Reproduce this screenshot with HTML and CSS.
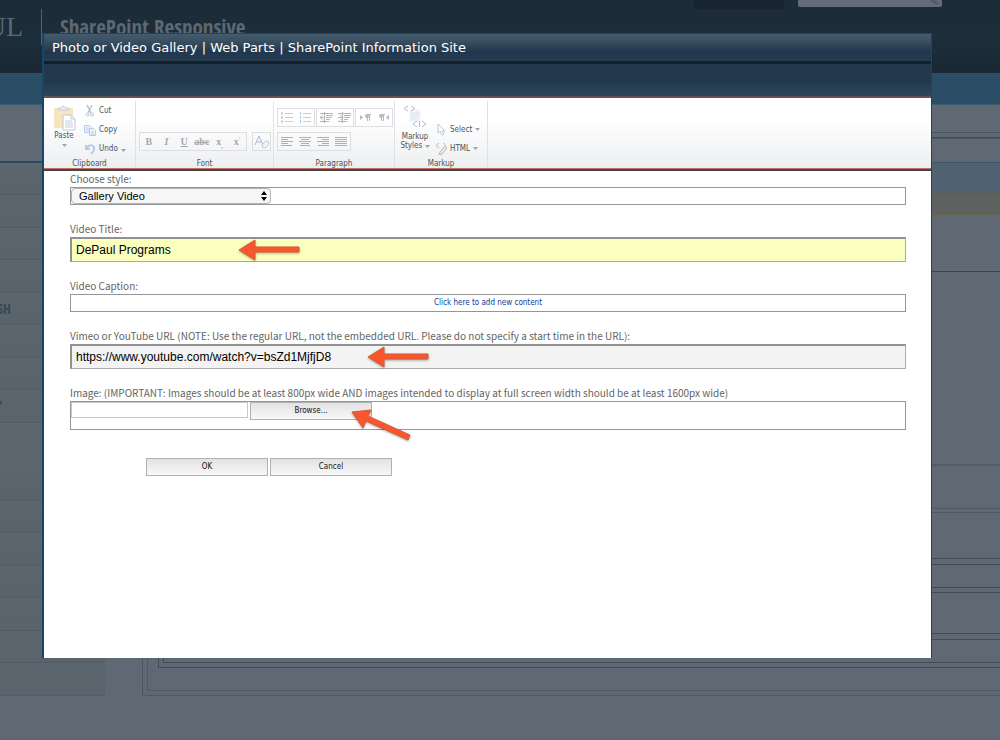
FILE: index.html
```html
<!DOCTYPE html>
<html lang="en">
<head>
<meta charset="utf-8">
<title>Photo or Video Gallery</title>
<link rel="stylesheet" href="styles.css">
</head>
<body>
<div class="site">
  <header class="masthead">
    <span class="logo">UL</span>
    <span class="site-name">SharePoint Responsive</span>
    <span class="top-link"></span>
    <span class="top-search"><svg width="14" height="8" viewBox="0 0 14 8"><path d="M3 0l7 4" stroke="#505c66" stroke-width="3"/></svg></span>
  </header>
  <div class="nav"></div>
  <div class="columns">
    <div class="side">
      <div class="side-head"></div>
      <div class="side-row"></div><div class="side-row"></div><div class="side-row"></div><div class="side-row"></div>
      <div class="side-row side-text">SH</div>
      <div class="side-row"></div><div class="side-row"></div><div class="side-row side-mark">’</div>
      <div class="side-gap"></div>
      <div class="side-row"></div><div class="side-row"></div><div class="side-row"></div><div class="side-row"></div><div class="side-row"></div><div class="side-row"></div><div class="side-row"></div>
    </div>
    <div class="main">
      <div class="crumb"></div>
      <div class="tabs"></div>
      <div class="info"></div>
      <div class="warn"></div>
      <div class="intro"></div>
      <div class="blank"></div>
      <div class="zone zone-a"></div>
      <div class="zones">
        <div class="part part-a"></div>
        <div class="part part-b"></div>
        <div class="part part-c"></div>
        <div class="part part-d"></div>
      </div>
    </div>
  </div>
</div>

<div class="dialog" role="dialog" aria-labelledby="dialog-title">
  <h1 class="dialog-title" id="dialog-title">Photo or Video Gallery | Web Parts | SharePoint Information Site</h1>
  <div class="band"></div>
  <div class="ribbon">
    <section class="group clipboard">
      <div class="group-body">
        <button class="tool big" type="button">
          <svg width="23" height="26" viewBox="0 0 23 26"><rect x="1" y="3" width="19" height="20" rx="1" fill="#f7e5bd"/><path d="M5 5V3h3q2-4 5 0h3v2z" fill="#eee" stroke="#c9ccd2"/><path d="M10 10h8l4 4v11H10z" fill="#fff" stroke="#b9cbe0"/><path d="M18 10v4h4M12 16h7M12 18h8M12 20h8M12 22h8" stroke="#c4d1e2" fill="none"/></svg>
          <span>Paste</span><svg class="caret" width="5" height="3"><path d="M0 0h5L2.500 3z"/></svg>
        </button>
        <div class="stack">
          <button class="tool" type="button"><svg width="12" height="12" viewBox="0 0 12 12" fill="none" stroke="#b4c4d8"><path d="M3 0l4 8M8 0L4 8" stroke-width="1.500"/><circle cx="3.500" cy="9.500" r="1.500"/><circle cx="8" cy="9.500" r="1.500"/></svg>Cut</button>
          <button class="tool" type="button"><svg width="12" height="12" viewBox="0 0 12 12" fill="#eef4fb" stroke="#b9cbe3"><path d="M.500 1.500h5l2 2v5h-7z"/><path d="M5.500 4.500h4l2 2v5h-6z"/><path d="M2 4h3M2 6h3M7 8h3M7 10h3"/></svg>Copy</button>
          <button class="tool" type="button"><svg width="12" height="12" viewBox="0 0 12 12" fill="none" stroke="#b9c8e8" stroke-width="2"><path d="M2 2v4h4M2 5q5-5 8-1 1 3-3 7"/></svg>Undo<svg class="caret" width="5" height="3"><path d="M0 0h5L2.500 3z"/></svg></button>
        </div>
      </div>
      <h2>Clipboard</h2>
    </section>
    <section class="group font">
      <div class="group-body low">
        <div class="strip">
          <button class="fmt" type="button"><b>B</b></button><button class="fmt" type="button"><b><i>I</i></b></button><button class="fmt" type="button"><b><u>U</u></b></button><button class="fmt" type="button"><b><s>abc</s></b></button><button class="fmt" type="button"><b>x<sub>,</sub></b></button><button class="fmt" type="button"><b>x<sup>'</sup></b></button>
        </div>
        <div class="strip">
          <button class="fmt" type="button" aria-label="Clear format"><svg width="16" height="14" viewBox="0 0 16 14" fill="none" stroke="#a9b8d4"><path d="M1 10L5 1l4 9M3 7h5"/><path d="M8 10l4-4q3 0 3 3l-4 4q-3 0-3-3z" fill="#f3f4f8" stroke="#c6c4d2"/></svg></button>
        </div>
      </div>
      <h2>Font</h2>
    </section>
    <section class="group paragraph">
      <div class="group-body rows">
        <div class="strips">
          <div class="strip">
            <button class="fmt" type="button" aria-label="Bullets"><svg width="12" height="11" viewBox="0 0 12 11"><path d="M4 1.500h8M4 5.500h8M4 9.500h8" stroke="#cdcdd0"/><path d="M0 1.500h2M0 5.500h2M0 9.500h2" stroke="#b9c7dc" stroke-width="2"/></svg></button>
            <button class="fmt" type="button" aria-label="Numbering"><svg width="12" height="11" viewBox="0 0 12 11"><path d="M4 1.500h8M4 5.500h8M4 9.500h8" stroke="#cdcdd0"/><path d="M1.500 0v3M1.500 4v3M1.500 8v3" stroke="#b9c7dc"/></svg></button>
          </div>
          <div class="strip">
            <button class="fmt" type="button" aria-label="Outdent"><svg width="13" height="11" viewBox="0 0 13 11"><path d="M0 1.500h13M6 3.500h7M6 5.500h6M6 7.500h4M0 9.500h9M4.500 0v11" stroke="#b4b4b9"/><path d="M5 5.500H0l3-3M0 5.500l3 3" stroke="#a9bad3" fill="none"/></svg></button>
            <button class="fmt" type="button" aria-label="Indent"><svg width="13" height="11" viewBox="0 0 13 11"><path d="M0 1.500h13M6 3.500h7M6 5.500h6M6 7.500h4M0 9.500h9M4.500 0v11" stroke="#b4b4b9"/><path d="M0 5.500h5l-3-3M5 5.500l-3 3" stroke="#a9bad3" fill="none"/></svg></button>
          </div>
          <div class="strip">
            <button class="fmt" type="button" aria-label="Left to right"><svg width="11" height="9" viewBox="0 0 11 9"><path d="M0 2l3 2.500L0 7z" fill="#a6b9d4"/><path d="M11 1.500H6M7.500 1v7M9.500 1v7" stroke="#b9b9b9"/><circle cx="7" cy="3" r="2" fill="#b9b9b9"/></svg></button>
            <button class="fmt" type="button" aria-label="Right to left"><svg width="11" height="9" viewBox="0 0 11 9"><path d="M11 2L8 4.500 11 7z" fill="#a6b9d4"/><path d="M7 1.500H2M3.500 1v7M5.500 1v7" stroke="#b9b9b9"/><circle cx="3" cy="3" r="2" fill="#b9b9b9"/></svg></button>
          </div>
        </div>
        <div class="strips">
          <div class="strip">
            <button class="fmt" type="button" aria-label="Align left"><svg width="12" height="10"><path d="M0 .500h12M0 2.500h7M0 4.500h12M0 6.500h7M0 8.500h11" stroke="#b0b0b3"/></svg></button>
            <button class="fmt" type="button" aria-label="Center"><svg width="12" height="10"><path d="M0 .500h12M2 2.500h8M0 4.500h12M2 6.500h8M1 8.500h10" stroke="#b0b0b3"/></svg></button>
            <button class="fmt" type="button" aria-label="Align right"><svg width="12" height="10"><path d="M0 .500h12M5 2.500h7M0 4.500h12M5 6.500h7M1 8.500h11" stroke="#b0b0b3"/></svg></button>
            <button class="fmt" type="button" aria-label="Justify"><svg width="12" height="10"><path d="M0 .500h12M0 2.500h12M0 4.500h12M0 6.500h12M0 8.500h12" stroke="#b0b0b3"/></svg></button>
          </div>
        </div>
      </div>
      <h2>Paragraph</h2>
    </section>
    <section class="group markup">
      <div class="group-body">
        <button class="tool big" type="button">
          <svg width="24" height="24" viewBox="0 0 24 24" fill="none" stroke="#bcbcc0"><path d="M7 5h9l1 2v9H7z" fill="#f3f7fc" stroke="#e9eff6"/><path d="M8 8h8M8 10h8M8 12h8M8 14h6" stroke="#d9e2ee"/><path d="M5 1L1 3.500 5 6M8 1l4 2.500L8 6M14 16l-4 3 4 3M19 16l4 3-4 3M16.500 16v6"/></svg>
          <span>Markup<br>Styles <svg class="caret" width="5" height="3"><path d="M0 0h5L2.500 3z"/></svg></span>
        </button>
        <div class="stack">
          <button class="tool" type="button"><svg width="12" height="13" viewBox="0 0 12 13"><path d="M3 1v9l2-2 2 4 2-1-2-3h3z" fill="#fff" stroke="#c0c5cd"/></svg>Select<svg class="caret" width="5" height="3"><path d="M0 0h5L2.500 3z"/></svg></button>
          <button class="tool" type="button"><svg width="12" height="13" viewBox="0 0 12 13" fill="none" stroke="#bbb8b6"><path d="M4 1L1 3.500 4 6M8 1l3 2.500L8 6"/><path d="M5 10l5-6 2 2-5 6-3 1z" fill="#f4e7d8"/></svg>HTML<svg class="caret" width="5" height="3"><path d="M0 0h5L2.500 3z"/></svg></button>
        </div>
      </div>
      <h2>Markup</h2>
    </section>
  </div>

  <form class="form">
    <div class="field">
      <label for="style">Choose style:</label>
      <div class="box">
        <div class="select"><select id="style"><option>Gallery Video</option></select><svg width="6" height="10" viewBox="0 0 6 10"><path d="M3 0l3 4H0zM3 10l3-4H0z"/></svg></div>
      </div>
    </div>
    <div class="field">
      <label for="title">Video Title:</label>
      <input class="text active" id="title" type="text" value="DePaul Programs">
      <svg class="arrow at-title" width="64" height="24" viewBox="0 0 64 24"><path d="M2 12L18 2v7h44v5H18v8z"/></svg>
    </div>
    <div class="field">
      <span class="label">Video Caption:</span>
      <div class="box center"><a href="#caption">Click here to add new content</a></div>
    </div>
    <div class="field">
      <label for="url">Vimeo or YouTube URL (NOTE: Use the regular URL, not the embedded URL. Please do not specify a start time in the URL):</label>
      <input class="text" id="url" type="text" value="https://www.youtube.com/watch?v=bsZd1MjfjD8">
      <svg class="arrow at-url" width="64" height="24" viewBox="0 0 64 24"><path d="M2 12L18 2v7h44v5H18v8z"/></svg>
    </div>
    <div class="field">
      <label for="image">Image: (IMPORTANT: Images should be at least 800px wide AND images intended to display at full screen width should be at least 1600px wide)</label>
      <div class="box upload"><input id="image" type="text"><button class="push" type="button">Browse...</button></div>
      <svg class="arrow at-image" width="64" height="36" viewBox="0 0 64 36"><path d="M2 4L21 2l-3 6 42 19-2 5-42-19-3 7z"/></svg>
    </div>
    <div class="actions"><button class="push" type="button">OK</button><button class="push" type="button">Cancel</button></div>
  </form>
</div>
</body>
</html>
```
FILE: styles.css
```css
* { box-sizing: border-box; }
body { margin: 0; background: #5f6873; font-family: "Noto Sans CJK SC", "Noto Sans", sans-serif; position: relative; }
button, input, select { font: inherit; margin: 0; }
svg { flex: none; }

/* Dimmed page */
.site { min-height: 100vh; overflow: hidden; }
.masthead { height: 73px; display: flex; align-items: flex-start; background: linear-gradient(#1c2c39, #1c2e3a 60%, #1a2732); color: #5c6872; }
.logo { width: 42px; height: 36px; margin-top: 9px; display: flex; align-items: center; justify-content: flex-end; padding-right: 18px; border-right: 1px solid #53616c; font: 28px/34px "Liberation Serif", serif; }
.site-name { margin: 14px 0 0 18px; font: bold 21px/26px "Open Sans Condensed", "Roboto Condensed", "Noto Sans CJK SC", sans-serif; white-space: nowrap; }
.top-link { width: 90px; height: 9px; margin-left: auto; background: #182430; border-radius: 0 0 2px 2px; }
.top-search { width: 144px; height: 7px; margin: 0 58px 0 14px; background: #646c78; border-radius: 0 0 2px 2px; display: flex; justify-content: flex-end; overflow: hidden; }
.nav { height: 32px; background: #2c4d66; border-top: 1px solid #304f62; border-bottom: 1px solid #405a70; }
.columns { display: flex; }
.side { width: 105px; flex: none; }
.side-head { height: 58px; border-bottom: 2px solid #284762; }
.side-row { height: 32px; border-bottom: 1px solid #535c65; background: linear-gradient(#5b666f, #58636c); }
.side-row:nth-child(odd) { height: 33px; }
.side-text, .side-mark { font: bold 14px/32px "Open Sans Condensed", "Roboto Condensed", "Noto Sans CJK SC", sans-serif; color: #3b4650; display: flex; justify-content: flex-end; padding-right: 94px; }
.side-mark { padding-right: 103px; }
.side-gap { height: 45px; background: #5d6770; }
.main { flex: 1; }
.crumb { height: 28px; border-bottom: 1px solid #455363; }
.tabs { height: 26px; margin-top: 4px; border-top: 1px solid #3c4a59; border-bottom: 1px solid #3d566d; box-shadow: inset 0 1px #4b5967; }
.info { height: 31px; background: #506172; }
.warn { height: 21px; background: #5d6260; border-top: 1px solid #665f41; border-bottom: 1px solid #666349; }
.intro { height: 57px; border-bottom: 1px solid #37444f; }
.blank { height: 194px; border-bottom: 2px solid #525b66; }
.zone-a { height: 43px; border-bottom: 1px solid #505964; }
.zones { margin: 3px 0 0 37px; padding: 0 0 0 15px; height: 184px; border-left: 1px solid #4d5661; border-bottom: 1px solid #505964; border-top: 1px solid #505964; box-shadow: inset 4px -4px #5f6873, inset 5px -5px #505964; }
.part { border: 1px solid #414c57; border-right: 0; }
.part-a { height: 46px; border-top: 0; }
.part-b { height: 24px; margin-top: 5px; }
.part-c { height: 42px; margin-top: 4px; }
.part-d { height: 29px; margin-top: 5px; box-shadow: inset 4px -4px #5f6873, inset 5px -5px #414c57; }

/* Dialog */
.dialog { position: absolute; inset: 33px 68px 82px 42px; background: #fff; border: solid #17466c; border-width: 1px 1px 0 2px; }
.dialog-title { margin: 0; height: 30px; padding-left: 8px; border-bottom: 3px solid #12202b; background: linear-gradient(#415b71, #3c5061 25%, #21374d 65%, #263c50); color: #fff; font: 13px/27px "DejaVu Sans", sans-serif; white-space: nowrap; }
.band { height: 34px; background: linear-gradient(#22384d 50%, #2e465c); border-bottom: 2px solid #65534f; }
.ribbon { height: 73px; display: flex; background: linear-gradient(#fff 30%, #eceef0); border-bottom: 2px solid #48434c; box-shadow: inset 0 -1px #bd765d; font: 8px/10px "DejaVu Sans Condensed", "DejaVu Sans", sans-serif; color: #4b535d; }
.group { display: flex; flex-direction: column; border-right: 1px solid #dfe1e4; margin-top: 3px; height: 67px; }
.group h2 { margin: 0; font: inherit; text-align: center; height: 10px; }
.group-body { height: 58px; flex: none; display: flex; }
.clipboard { width: 92px; }
.font { width: 138px; }
.paragraph { width: 121px; }
.markup { width: 93px; }
.clipboard .group-body { padding-left: 8px; gap: 8px; }
.markup .group-body { padding-left: 4px; gap: 4px; }
.tool { border: 0; padding: 0; background: none; color: inherit; display: flex; align-items: center; gap: 3px; height: 19px; white-space: nowrap; }
.big { flex-direction: column; height: auto; padding-top: 4px; justify-content: flex-start; line-height: 9px; }
.clipboard .big { width: 24px; gap: 0; }
.clipboard .caret { margin-top: 4px; }
.markup .big { width: 32px; }
.markup .stack { padding-top: 19px; }
.caret { fill: #a0a4aa; }
.low { align-items: flex-end; padding: 0 0 8px 3px; gap: 5px; }
.rows { flex-direction: column; gap: 5px; padding: 7px 0 0 3px; }
.strips { display: flex; gap: 1px; }
.strip { display: flex; height: 19px; border: 1px solid #dcdee1; }
.fmt { border: 0; padding: 0; width: 18px; background: none; color: #a8a8ac; font: 10px/16px "Liberation Serif", serif; display: flex; align-items: center; justify-content: center; }
.font .fmt { width: 17px; }
.font .strip:first-child .fmt { width: 18px; }
.font .strip:first-child { width: 108px; }
.fmt sub, .fmt sup { font-size: 7px; line-height: 1px; }

/* Form */
.form { padding: 0 25px 0 26px; font-size: 10px; color: #646464; }
.field { position: relative; margin-bottom: 16px; }
.field label, .label { display: block; font-size: 10px; line-height: 15px; height: 16px; white-space: nowrap; }
.box { min-height: 18px; border: 1px solid #969696; display: flex; background: #fff; }
.select { width: 200px; position: relative; }
.select select { display: block; width: 100%; height: 16px; padding: 0 7px; appearance: none; border: 1px solid #b3b3b3; border-radius: 4px; background: #f6f6f6; color: #000; font: 11px/14px "Liberation Sans", sans-serif; }
.select svg { position: absolute; right: 4px; top: 3px; }
.text { display: block; width: 100%; height: 25px; padding: 0 4px; border: 1px solid #aaa; border-top: 2px solid #919191; border-left: 2px solid #919191; background: #f3f3f3; color: #000; font: 12px "Liberation Sans", sans-serif; }
.active { background: #faffbd; }
.center { justify-content: center; font: 8px/16px "DejaVu Sans Condensed", "DejaVu Sans", sans-serif; }
.center a { color: #0c3d9b; text-decoration: none; }
.upload { min-height: 29px; align-items: flex-start; gap: 2px; }
.upload input { width: 177px; height: 16px; border: 1px solid #c8c8c8; padding: 0 3px; }
.push { width: 122px; height: 18px; padding: 0; border: 1px solid #aeb0b2; background: linear-gradient(#e2e2e2, #f8f8f8); color: #111; font: 8px/14px "DejaVu Sans Condensed", "DejaVu Sans", sans-serif; }
.actions { display: flex; gap: 2px; padding: 12px 0 0 76px; }
.arrow { position: absolute; fill: #f9562d; stroke: #d65a35; stroke-width: 1px; filter: drop-shadow(0 1px 1px #0005); }
.at-title { left: 167px; top: 17px; }
.at-url { left: 296px; top: 17px; }
.at-image { left: 280px; top: 23px; }
```
